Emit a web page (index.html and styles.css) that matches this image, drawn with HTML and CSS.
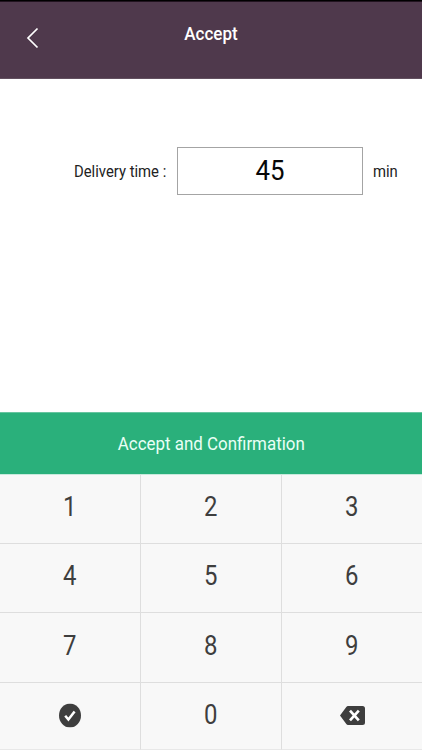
FILE: index.html
```html
<!DOCTYPE html>
<html lang="en">
<head>
<meta charset="utf-8">
<title>Accept</title>
<link rel="stylesheet" href="styles.css">
</head>
<body>
<div class="screen">
  <header class="header">
    <svg class="back" viewBox="0 0 14 22"><path d="M11.500 1.500 2 11l9.500 9.500"/></svg>
    <h1 class="title">Accept</h1>
  </header>
  <main class="form">
    <div class="label"><span class="narrow">Delivery time :</span></div>
    <div class="field"><span class="narrow">45</span></div>
    <span class="unit narrow">min</span>
  </main>
  <button class="confirm"><span class="narrow">Accept and Confirmation</span></button>
  <div class="keypad">
    <button class="key"><span class="digit">1</span></button>
    <button class="key"><span class="digit">2</span></button>
    <button class="key"><span class="digit">3</span></button>
    <button class="key"><span class="digit">4</span></button>
    <button class="key"><span class="digit">5</span></button>
    <button class="key"><span class="digit">6</span></button>
    <button class="key"><span class="digit">7</span></button>
    <button class="key"><span class="digit">8</span></button>
    <button class="key"><span class="digit">9</span></button>
    <button class="key"><svg class="check" viewBox="0 0 22 24"><ellipse cx="11" cy="12" rx="11" ry="12"/><path d="m6.200 12.200 3.200 3.800 6.200-8"/></svg></button>
    <button class="key"><span class="digit">0</span></button>
    <button class="key"><svg class="erase" viewBox="0 0 25 19"><path d="M8 0h14.500q2.500 0 2.500 2.500v14q0 2.500-2.500 2.500H8q-1 0-1.700-1L0 9.500 6.300 1Q7 0 8 0z"/><path class="cross" d="m10 4.700 8.800 9.600m0-9.600-8.800 9.600"/></svg></button>
  </div>
</div>
</body>
</html>
```
FILE: styles.css
```css
* { box-sizing: border-box; }
body { margin: 0; font-family: Roboto, sans-serif; background: #fff; color: #222; }
button { border: 0; padding: 0; font-family: inherit; }
.screen { width: 422px; height: 750px; display: flex; flex-direction: column; overflow: hidden; }
.narrow { display: inline-block; transform: scaleX(.905); }
.header { height: 79px; flex: none; display: grid; grid-template-columns: 60px 1fr 60px; background: #4f394c; border-top: 1px solid #000; border-bottom: 1px solid #62505f; box-shadow: inset 0 1px #21131f; color: #fff; }
.back { width: 14px; height: 22px; margin: 26px 0 0 26px; fill: none; stroke: #fff; stroke-width: 1.7; }
.title { margin: 22px 0 0; text-align: center; font-size: 18.5px; line-height: 22px; font-weight: 500; transform: scaleX(.92); }
.form { flex: none; height: 333px; display: flex; align-items: flex-start; padding-top: 68px; line-height: 48px; font-size: 16.4px; }
.label { width: 177px; padding-left: 74px; white-space: nowrap; }
.label .narrow, .unit { transform-origin: left; transform: translateY(.5px) scaleX(.905); }
.field { width: 186px; height: 48px; border: 1px solid #a4a4a4; text-align: center; font-size: 28.5px; line-height: 46px; color: #080808; }
.unit { margin-left: 10px; }
.confirm { flex: none; height: 62px; padding-top: 1px; background: #2ab07b; border-top: 1px solid #67c5a0; color: #e9fff6; font-size: 18.7px; }
.confirm .narrow { transform: translateY(-.5px) scaleX(.905); }
.keypad { flex: 1; display: grid; grid-template-columns: 141px 141px 140px; grid-template-rows: 70px 69px 70px 67px; }
.key { display: flex; align-items: center; justify-content: center; background: #f8f8f8; color: #3e3e3e; font-size: 27.2px; border-right: 1px solid #dedede; border-bottom: 1px solid #dedede; }
.key:nth-child(-n+3) { border-top: 1px solid #c8eadd; }
.key:nth-child(3n) { border-right: 0; }
.key:nth-child(n+10) { border-bottom-color: #e8e8e8; }
.digit { transform: translateY(-2px) scaleX(.88); }
.key:nth-child(n+7) .digit { transform: translateY(-2.5px) scaleX(.88); }
.key:nth-child(11) .digit { transform: translateY(-1.5px) scaleX(.88); }
.check { width: 22px; height: 24px; fill: #3e3e3e; transform: translateY(-.5px); }
.check path { fill: none; stroke: #fff; stroke-width: 2.5; }
.erase { width: 25px; height: 19px; fill: #3e3e3e; transform: translateY(-1px); }
.erase .cross { fill: none; stroke: #fff; stroke-width: 2.7; }
```
